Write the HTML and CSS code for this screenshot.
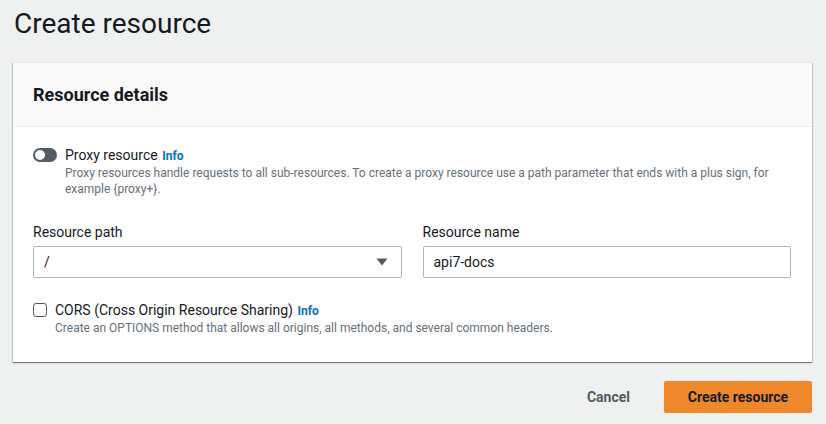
FILE: index.html
```html
<!DOCTYPE html>
<html lang="en">
<head>
<meta charset="utf-8">
<link rel="stylesheet" href="styles.css">
</head>
<body>
<div class="page">
  <h1 class="title">Create resource</h1>
  <div class="card">
    <div class="card-header">
      <h2 class="card-title">Resource details</h2>
    </div>
    <div class="card-body">
      <div class="toggle-row">
        <span class="toggle"><span class="knob"></span></span>
        <div class="toggle-text">
          <div class="label-line"><span class="label">Proxy resource</span> <a class="info">Info</a></div>
          <div class="desc">Proxy resources handle requests to all sub-resources. To create a proxy resource use a path parameter that ends with a plus sign, for example {proxy+}.</div>
        </div>
      </div>
      <div class="fields">
        <div class="field">
          <div class="field-label">Resource path</div>
          <div class="select">
            <span>/</span>
            <svg class="caret" width="12" height="8" viewBox="0 0 12 8"><path d="M0.5 0.5 H11.5 L6 7.5 Z" fill="#545b64"/></svg>
          </div>
        </div>
        <div class="field">
          <div class="field-label">Resource name</div>
          <div class="input">api7-docs</div>
        </div>
      </div>
      <div class="check-row">
        <span class="checkbox"></span>
        <div class="check-text">
          <div class="label-line"><span class="label">CORS (Cross Origin Resource Sharing)</span> <a class="info">Info</a></div>
          <div class="desc">Create an OPTIONS method that allows all origins, all methods, and several common headers.</div>
        </div>
      </div>
    </div>
  </div>
  <div class="actions">
    <button class="btn-link">Cancel</button>
    <button class="btn-primary">Create resource</button>
  </div>
</div>
</body>
</html>
```

FILE: styles.css
```css
* { box-sizing: border-box; }
html, body {
  margin: 0;
  padding: 0;
  background: #eff0f0;
  font-family: Roboto, "Liberation Sans", sans-serif;
  color: #16191f;
}
.page {
  padding: 6px 14px 0 13px;
}
.title {
  margin: 0 0 0 1px;
  font-size: 28px;
  font-weight: 400;
  line-height: 36px;
  color: #16191f;
}
.card {
  margin-top: 20px;
  background: #fff;
  border-top: 1px solid #e3e5e5;
  box-shadow: 0 1px 1px 0 rgba(0,28,36,0.3), 1px 1px 1px 0 rgba(0,28,36,0.15), -1px 1px 1px 0 rgba(0,28,36,0.15);
}
.card-header {
  background: #fafafa;
  border-bottom: 1px solid #eaeded;
  height: 64px;
  display: flex;
  align-items: center;
  padding: 0 20px;
}
.card-title {
  margin: 0;
  font-size: 18px;
  font-weight: 700;
  line-height: 22px;
}
.card-body {
  padding: 19px 21px 26px 20px;
}
.toggle-row, .check-row {
  display: flex;
  align-items: flex-start;
}
.toggle {
  flex: none;
  width: 24px;
  height: 14px;
  border-radius: 7px;
  background: #545b64;
  margin-top: 2px;
  margin-right: 8px;
  position: relative;
}
.knob {
  position: absolute;
  left: 2px;
  top: 2px;
  width: 10px;
  height: 10px;
  border-radius: 50%;
  background: #fff;
}
.label-line {
  font-size: 14px;
  line-height: 18px;
}
.label { color: #16191f; }
.info {
  color: #0073bb;
  font-weight: 700;
  font-size: 12px;
  margin-left: 1px;
}
.desc {
  font-size: 12px;
  line-height: 16px;
  color: #687078;
}
.fields {
  display: grid;
  grid-template-columns: 1fr 1fr;
  column-gap: 21px;
  margin-top: 26px;
}
.field-label {
  font-size: 14px;
  line-height: 18px;
  margin-bottom: 5px;
}
.select, .input {
  height: 32px;
  border: 1px solid #aab7b8;
  border-radius: 2px;
  background: #fff;
  display: flex;
  align-items: center;
  padding: 0 13px 0 10px;
  font-size: 14px;
  color: #16191f;
}
.select { justify-content: space-between; }
.caret { display: block; }
.check-row {
  margin-top: 23px;
}
.checkbox {
  flex: none;
  width: 14px;
  height: 14px;
  border: 1px solid #545b64;
  border-radius: 3px;
  background: #fff;
  margin-top: 2px;
  margin-right: 8px;
}
.actions {
  display: flex;
  justify-content: flex-end;
  align-items: center;
  margin-top: 19px;
  gap: 20px;
}
.btn-link, .btn-primary {
  font-family: inherit;
  font-size: 14px;
  font-weight: 700;
  border: none;
  cursor: pointer;
}
.btn-link {
  background: none;
  color: #545b64;
  padding: 4px 14px;
}
.btn-primary {
  background: #ef872b;
  color: #16191f;
  border-radius: 2px;
  height: 32px;
  padding: 0 20px;
  width: 148px;
}
```
